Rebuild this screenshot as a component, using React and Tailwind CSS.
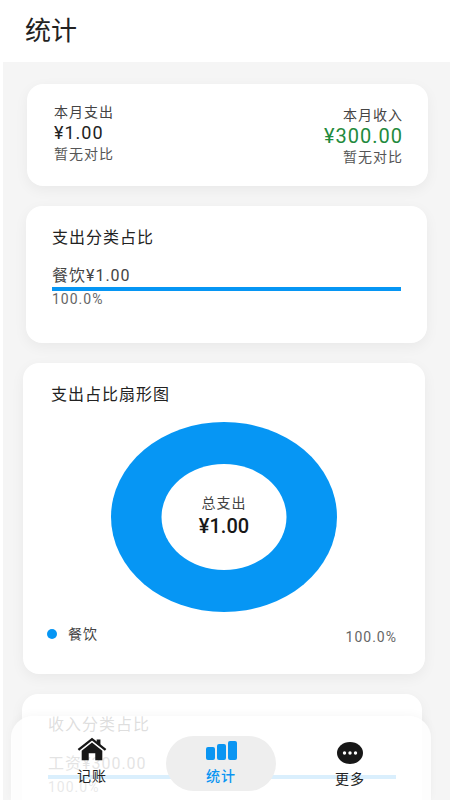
const FONT = "font-['Roboto','Noto_Sans_CJK_SC',sans-serif]"

function HomeIcon() {
    return (
        <svg viewBox="0 0 32 28" preserveAspectRatio="none" className="h-[24px] w-[30px]" aria-hidden="true">
            <path d="M21 3h4v8l-4-3z" fill="#171717" />
            <path d="M1.5 15 16 2.5 30.5 15" fill="none" stroke="#171717" strokeWidth="2.4" strokeLinejoin="miter" />
            <path d="M16 6.5 27 16v11h-7.5v-8h-7v8H5V16z" fill="#171717" />
        </svg>
    )
}

function BarsIcon() {
    return (
        <svg viewBox="0 0 31 19" className="h-[19px] w-[31px]" aria-hidden="true">
            <rect x="0" y="6" width="9" height="13" rx="2" fill="#0a95f2" />
            <rect x="11" y="3" width="9" height="16" rx="2" fill="#0a95f2" />
            <rect x="22" y="0" width="9" height="19" rx="2" fill="#0a95f2" />
        </svg>
    )
}

function MoreIcon() {
    return (
        <svg viewBox="0 0 26 22" className="h-[22px] w-[26px]" aria-hidden="true">
            <ellipse cx="13" cy="11" rx="13" ry="11" fill="#171717" />
            <circle cx="7.5" cy="11" r="1.7" fill="#fff" />
            <circle cx="13" cy="11" r="1.7" fill="#fff" />
            <circle cx="18.5" cy="11" r="1.7" fill="#fff" />
        </svg>
    )
}

function Donut() {
    return (
        <div className="relative mx-auto h-[190px] w-[226px]">
            <svg viewBox="0 0 226 190" className="h-full w-full" aria-hidden="true">
                <ellipse cx="113" cy="95" rx="113" ry="95" fill="#0696f4" />
                <ellipse cx="113" cy="95" rx="62.5" ry="53" fill="#fff" />
            </svg>
            <div className="absolute inset-0 flex flex-col items-center justify-center pb-[4px]">
                <span className="text-sm leading-5 tracking-[1px] text-[#444]">总支出</span>
                <span className="mt-[1px] text-[20px] leading-6 font-medium text-[#171717]">¥1.00</span>
            </div>
        </div>
    )
}

export default function App() {
    return (
        <div className={`relative h-[800px] w-[450px] overflow-hidden bg-white ${FONT}`}>
            <header className="flex h-[62px] items-center pl-[25px]">
                <h1 className="text-[26px] leading-8 font-normal text-[#222]">统计</h1>
            </header>

            <main className="ml-[3px] flex h-[738px] flex-col gap-[20px] bg-[#f5f5f5] pt-[22px]">
                <section className="mr-[22px] ml-[24px] flex h-[102px] shrink-0 justify-between rounded-2xl bg-white pt-[18px] pr-[25px] pl-[27px] shadow-[0_4px_14px_rgba(0,0,0,0.05)]">
                    <div>
                        <p className="text-sm leading-5 tracking-[1px] text-[#444]">本月支出</p>
                        <p className="text-lg leading-[22px] tracking-[1px] text-[#222]">¥1.00</p>
                        <p className="text-sm leading-5 tracking-[1px] text-[#555]">暂无对比</p>
                    </div>
                    <div className="pt-[3px] text-right">
                        <p className="text-sm leading-5 tracking-[1px] text-[#444]">本月收入</p>
                        <p className="text-[20px] leading-[22px] tracking-[1px] text-[#1f8a3d]">¥300.00</p>
                        <p className="text-sm leading-5 tracking-[1px] text-[#555]">暂无对比</p>
                    </div>
                </section>

                <section className="mr-[23px] ml-[23px] h-[137px] shrink-0 rounded-2xl bg-white px-[26px] pt-[21px] shadow-[0_4px_14px_rgba(0,0,0,0.05)]">
                    <h2 className="text-base leading-[22px] tracking-[1px] text-[#222]">支出分类占比</h2>
                    <p className="mt-[16px] text-base leading-[22px] tracking-[1px] text-[#444]">餐饮¥1.00</p>
                    <div className="h-[4px] w-full bg-[#0696f4]" />
                    <p className="text-sm leading-[17px] tracking-[1px] text-[#666]">100.0%</p>
                </section>

                <section className="mr-[25px] ml-[20px] h-[311px] shrink-0 rounded-2xl bg-white pt-[21px] pr-[28px] pl-[28px] shadow-[0_4px_14px_rgba(0,0,0,0.05)]">
                    <h2 className="text-base leading-[22px] tracking-[1px] text-[#222]">支出占比扇形图</h2>
                    <div className="mt-[16px]">
                        <Donut />
                    </div>
                    <div className="mt-[8px] flex items-center justify-between">
                        <div className="-ml-[4px] flex items-center gap-[11px]">
                            <span className="h-[10px] w-[10px] rounded-full bg-[#0696f4]" />
                            <span className="text-sm leading-5 tracking-[1px] text-[#444]">餐饮</span>
                        </div>
                        <span className="mt-[7px] text-sm leading-5 tracking-[1px] text-[#666]">100.0%</span>
                    </div>
                </section>

                <section className="mr-[28px] ml-[19px] h-[140px] shrink-0 rounded-2xl bg-white px-[26px] pt-[20px] shadow-[0_4px_14px_rgba(0,0,0,0.05)]">
                    <h2 className="text-base leading-[22px] tracking-[1px] text-[#222]">收入分类占比</h2>
                    <p className="mt-[17px] text-base leading-[22px] tracking-[1px] text-[#444]">工资¥300.00</p>
                    <div className="h-[4px] w-full bg-[#0696f4]" />
                    <p className="text-sm leading-[17px] tracking-[1px] text-[#666]">100.0%</p>
                </section>
            </main>

            <nav className="absolute right-[19px] bottom-0 left-[11px] grid h-[84px] grid-cols-3 items-center rounded-t-[22px] bg-white/85 pt-[10px] shadow-[0_-2px_10px_rgba(0,0,0,0.03)]">
                <div className="flex flex-col items-center pb-[4px] pl-[22px]">
                    <HomeIcon />
                    <span className="mt-[7px] text-sm leading-[17px] tracking-[1px] text-[#222]">记账</span>
                </div>
                <div className="flex h-[55px] w-[110px] flex-col items-center justify-center justify-self-center rounded-[28px] bg-[#eeeeee]">
                    <BarsIcon />
                    <span className="mt-[8px] text-sm leading-[17px] font-medium tracking-[1px] text-[#0a95f2]">统计</span>
                </div>
                <div className="flex flex-col items-center pt-[4px] pr-[22px]">
                    <MoreIcon />
                    <span className="mt-[7px] text-sm leading-[17px] tracking-[1px] text-[#222]">更多</span>
                </div>
            </nav>
        </div>
    )
}
